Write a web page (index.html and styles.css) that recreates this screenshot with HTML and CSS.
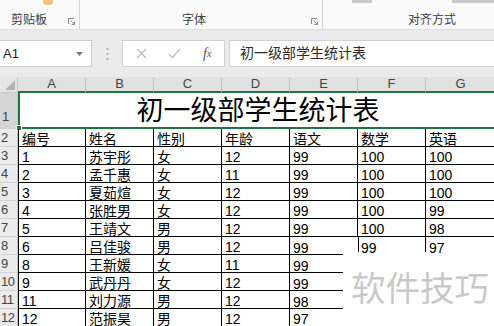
FILE: index.html
```html
<!DOCTYPE html>
<html lang="zh">
<head>
<meta charset="utf-8">
<title>初一级部学生统计表</title>
<link rel="stylesheet" href="styles.css">
</head>
<body>
<div class="ribbon">
  <div class="grp g1">
    <span class="frag paste"></span>
    <span class="lbl">剪贴板</span>
    <span class="launch"><svg width="7" height="7" viewBox="0 0 7 7"><path d="M0.5 6V0.5H6" fill="none" stroke="#8a8a8a"/><path d="M2.5 2.5L6.5 6.5M6.5 3.5V6.5H3.5" fill="none" stroke="#8a8a8a"/></svg></span>
  </div>
  <div class="grp g2">
    <span class="lbl">字体</span>
    <span class="launch"><svg width="7" height="7" viewBox="0 0 7 7"><path d="M0.5 6V0.5H6" fill="none" stroke="#8a8a8a"/><path d="M2.5 2.5L6.5 6.5M6.5 3.5V6.5H3.5" fill="none" stroke="#8a8a8a"/></svg></span>
  </div>
  <div class="grp g3">
    <span class="frag bar1"></span>
    <span class="frag bar2"></span>
    <span class="lbl">对齐方式</span>
  </div>
</div>

<div class="fbar">
  <div class="namebox"><span>A1</span><span class="caret"><svg width="7" height="4" viewBox="0 0 7 4"><path d="M0 0H7L3.5 4Z" fill="#777"/></svg></span></div>
  <div class="dots"><svg width="3" height="14" viewBox="0 0 3 14"><circle cx="1.5" cy="2" r="1" fill="#a8a8a8"/><circle cx="1.5" cy="7" r="1" fill="#a8a8a8"/><circle cx="1.5" cy="12" r="1" fill="#a8a8a8"/></svg></div>
  <div class="fxbox">
    <span class="fxi"><svg width="11" height="11" viewBox="0 0 11 11"><path d="M1 1L10 10M10 1L1 10" stroke="#b9b9b9" stroke-width="1.2"/></svg></span>
    <span class="fxi"><svg width="13" height="11" viewBox="0 0 13 11"><path d="M1 6L4.5 9.5L12 1" fill="none" stroke="#b9b9b9" stroke-width="1.2"/></svg></span>
    <span class="fxi fx">f<sub>x</sub></span>
  </div>
  <div class="finput">初一级部学生统计表</div>
</div>

<div class="sheet">
  <div class="corner"><svg width="10" height="10" viewBox="0 0 10 10"><path d="M10 0V10H0Z" fill="#b4b4b4"/></svg></div>
  <div class="ch">A</div><div class="ch">B</div><div class="ch">C</div><div class="ch">D</div><div class="ch">E</div><div class="ch">F</div><div class="ch last">G</div>

  <div class="rh sel">1</div>
  <div class="title">初一级部学生统计表<span class="handle"></span></div>

  <div class="rh">2</div>
  <div class="c a">编号</div><div class="c">姓名</div><div class="c">性别</div><div class="c">年龄</div><div class="c">语文</div><div class="c">数学</div><div class="c">英语</div>

  <div class="rh">3</div>
  <div class="c a">1</div><div class="c">苏宇彤</div><div class="c">女</div><div class="c">12</div><div class="c">99</div><div class="c">100</div><div class="c">100</div>

  <div class="rh">4</div>
  <div class="c a">2</div><div class="c">孟千惠</div><div class="c">女</div><div class="c">11</div><div class="c">99</div><div class="c">100</div><div class="c">100</div>

  <div class="rh">5</div>
  <div class="c a">3</div><div class="c">夏茹煊</div><div class="c">女</div><div class="c">12</div><div class="c">99</div><div class="c">100</div><div class="c">100</div>

  <div class="rh">6</div>
  <div class="c a">4</div><div class="c">张胜男</div><div class="c">女</div><div class="c">12</div><div class="c">99</div><div class="c">100</div><div class="c">99</div>

  <div class="rh">7</div>
  <div class="c a">5</div><div class="c">王靖文</div><div class="c">男</div><div class="c">12</div><div class="c">99</div><div class="c">100</div><div class="c">98</div>

  <div class="rh">8</div>
  <div class="c a">6</div><div class="c">吕佳骏</div><div class="c">男</div><div class="c">12</div><div class="c e short part">99</div><div class="c open part">99</div><div class="c open">97</div>

  <div class="rh">9</div>
  <div class="c a">8</div><div class="c">王新媛</div><div class="c">女</div><div class="c">11</div><div class="c e short">99</div><div class="blank"></div><div class="blank"></div>

  <div class="rh">10</div>
  <div class="c a">9</div><div class="c">武丹丹</div><div class="c">女</div><div class="c">12</div><div class="c e short">99</div><div class="blank"></div><div class="blank"></div>

  <div class="rh">11</div>
  <div class="c a">11</div><div class="c">刘力源</div><div class="c">男</div><div class="c">12</div><div class="c e short">98</div><div class="blank"></div><div class="blank"></div>

  <div class="rh">12</div>
  <div class="c a">12</div><div class="c">范振昊</div><div class="c">男</div><div class="c">12</div><div class="c e">97</div><div class="blank"></div><div class="blank"></div>

  <div class="watermark">软件技巧</div>
</div>
</body>
</html>
```

FILE: styles.css
```css
* { box-sizing: border-box; margin: 0; padding: 0; }

body {
  width: 494px;
  height: 326px;
  overflow: hidden;
  background: #fff;
  font-family: "Liberation Sans", "Noto Sans CJK SC", sans-serif;
  color: #000;
}

/* ---------- ribbon ---------- */
.ribbon {
  height: 30px;
  display: flex;
  background: #fafafa;
  border-bottom: 1px solid #dedede;
}
.grp {
  position: relative;
  height: 100%;
  display: flex;
  align-items: flex-end;
  padding-bottom: 2px;
  border-right: 1px solid #d4d4d4;
  font-size: 12px;
  line-height: 14px;
  color: #3c3c3c;
}
.g1 { width: 80px; padding-left: 11px; }
.g2 { width: 243px; padding-left: 102px; }
.g3 { flex: 1; padding-left: 85px; border-right: none; }
.launch { margin-left: auto; margin-right: 4px; margin-bottom: 2px; display: flex; }
.g2 .launch { margin-right: 4px; }
.frag { position: absolute; top: 0; }
.paste { left: 43px; width: 10px; height: 5px; background: #f2c27a; border-radius: 0 0 4px 4px; }
.bar1 { left: 29px; width: 20px; height: 3px; background: #c9c9c9; }
.bar2 { left: 129px; width: 50px; height: 3px; background: #c9c9c9; }

/* ---------- formula bar ---------- */
.fbar {
  height: 47px;
  display: flex;
  align-items: flex-start;
  padding-top: 10px;
  background: #ebebeb;
}
.namebox {
  width: 92px;
  height: 27px;
  background: #fff;
  border: 1px solid #cdcdcd;
  border-left: none;
  display: flex;
  align-items: center;
  justify-content: space-between;
  padding: 0 8px 0 3px;
  font-size: 13px;
  color: #222;
}
.caret { display: flex; }
.dots {
  width: 30px;
  height: 27px;
  display: flex;
  align-items: center;
  justify-content: center;
}
.fxbox {
  width: 103px;
  height: 27px;
  background: #fff;
  border: 1px solid #d2d2d2;
  display: flex;
  align-items: center;
  padding-left: 13px;
  gap: 21px;
}
.fxi { display: flex; align-items: center; }
.fx {
  font-family: "Liberation Serif", serif;
  font-style: italic;
  font-size: 14px;
  color: #555;
  margin-left: 1px;
}
.fx sub { font-size: 10px; vertical-align: -1px; }
.finput {
  flex: 1;
  height: 27px;
  margin-left: 4px;
  background: #fff;
  border: 1px solid #d2d2d2;
  border-right: none;
  padding-left: 10px;
  font-size: 14px;
  line-height: 25px;
  color: #2a2a2a;
}

/* ---------- sheet ---------- */
.sheet {
  position: relative;
  display: grid;
  grid-template-columns: 18px repeat(6, 68px) 70px;
  grid-template-rows: 16px 36px repeat(11, 18px);
  width: 496px;
}
.corner {
  background: #e6e6e6;
  border-right: 1px solid #c8c8c8;
  border-bottom: 1px solid #c8c8c8;
  display: flex;
  align-items: flex-end;
  justify-content: flex-end;
  padding: 0 2px 2px 0;
}
.ch {
  background: #e1e1e1;
  border-right: 1px solid #c2c2c2;
  border-bottom: 2px solid #217346;
  font-size: 13px;
  line-height: 14px;
  color: #454545;
  text-align: center;
}
.rh {
  background: #ebebeb;
  border-right: 1px solid #c6c6c6;
  border-bottom: 1px solid #d4d4d4;
  font-size: 13px;
  line-height: 14px;
  color: #444;
  padding-left: 1px;
  display: flex;
  align-items: flex-end;
  padding-bottom: 1px;
  letter-spacing: -0.5px;
}
.rh.sel { background: #d6d6d6; padding-left: 2px; padding-bottom: 4px; }

.title {
  position: relative;
  grid-column: 2 / 9;
  border-left: 2px solid #217346;
  border-bottom: 2px solid #217346;
  display: flex;
  align-items: flex-end;
  justify-content: center;
  font-size: 27px;
  line-height: 30px;
  padding-bottom: 1px;
  color: #000;
}
.handle {
  position: absolute;
  left: -4px;
  bottom: -4px;
  width: 6px;
  height: 6px;
  background: #217346;
  border: 1px solid #fff;
}

.c {
  position: relative;
  border-right: 1px solid #000;
  border-bottom: 1px solid #000;
  font-size: 14px;
  line-height: 13px;
  padding-left: 3px;
  display: flex;
  align-items: flex-end;
  white-space: nowrap;
}
.c.a { border-left: 1px solid #000; padding-left: 3px; }
.c.e { border-right: none; }
.c.short { border-bottom: none; }
.c.short::before {
  content: "";
  position: absolute;
  left: 0;
  bottom: 0;
  width: 53px;
  border-bottom: 1px solid #000;
}
.c.open { border-bottom: none; border-right: none; }
.c.part::after {
  content: "";
  position: absolute;
  right: -1px;
  top: 0;
  height: 15px;
  border-right: 1px solid #000;
}
.c.open.part::after { right: 0; }
.blank { background: #fff; }

.watermark {
  position: absolute;
  left: 351px;
  top: 189px;
  font-family: "Noto Sans CJK SC", sans-serif;
  font-size: 34.5px;
  line-height: 40px;
  color: #c9c9c9;
  letter-spacing: 0;
  pointer-events: none;
}
```
